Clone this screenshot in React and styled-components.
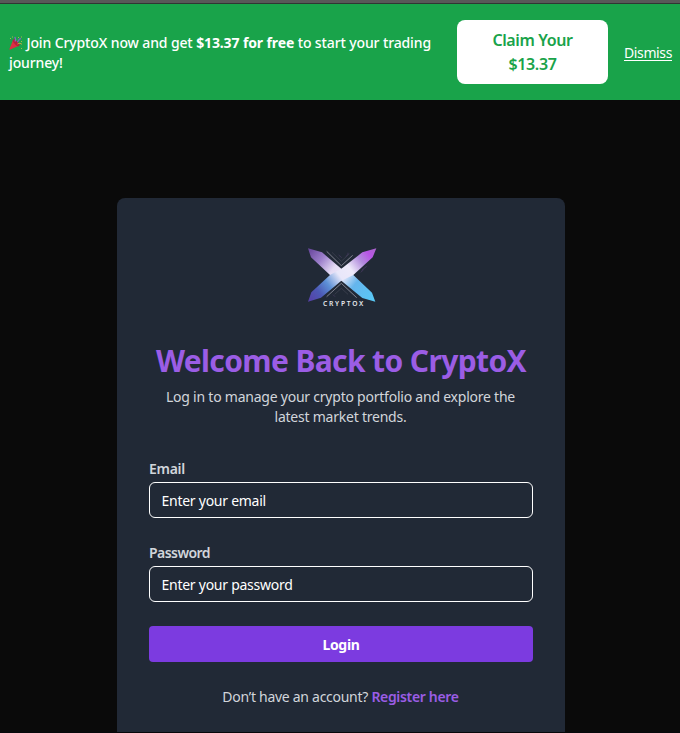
import React from 'react';
import styled, { createGlobalStyle } from 'styled-components';

const GlobalStyle = createGlobalStyle`
  *, *::before, *::after { box-sizing: border-box; }
  html, body { margin: 0; height: 100%; overflow: hidden; background: #0a0a0a; }
  body { font-family: "Noto Sans", sans-serif; font-size: 14px; line-height: 20px; color: #fff; }
  button, input { font: inherit; }
`;

const Page = styled.div`
  display: flex;
  flex-direction: column;
  height: 733px;
  overflow: hidden;
  border-bottom: 1px solid #06080b;
`;

const TopEdge = styled.div`
  flex: none;
  height: 4px;
  background: #585858;
  border-bottom: 1px solid #303533;
`;

const Banner = styled.header`
  flex: none;
  display: flex;
  align-items: center;
  height: 96px;
  padding: 0 8px 0 9px;
  background: #19a34a;
`;

const BannerText = styled.p`
  width: 448px;
  flex: none;
  margin: 0;
  padding-top: 2px;
  font-weight: 500;
  letter-spacing: -0.12px;
  white-space: nowrap;
`;

const PartyIcon = styled.svg`
  width: 14px;
  height: 14px;
  margin-right: 3.5px;
  vertical-align: -2px;
`;

const ClaimButton = styled.button`
  width: 151px;
  height: 64px;
  padding: 8px 32px;
  border: 0;
  border-radius: 8px;
  background: #fff;
  color: #19a34a;
  font-size: 16px;
  font-weight: 600;
  line-height: 24px;
  letter-spacing: -0.38px;
`;

const DismissButton = styled.button`
  margin-left: 16px;
  padding: 2px 0 0;
  border: 0;
  background: none;
  color: #fff;
  letter-spacing: -0.38px;
  text-decoration: underline;
  text-underline-offset: 2px;
  white-space: nowrap;
`;

const Card = styled.main`
  flex: none;
  width: 448px;
  height: 600px;
  margin: 98px 0 0 117px;
  padding: 42px 32px 32px;
  border-radius: 8px;
  background: #212936;
`;

const Logo = styled.svg`
  display: block;
  width: 82px;
  height: 75px;
  margin: 0 auto;
`;

const Title = styled.h1`
  margin: 28px 0 0;
  color: #9b5de5;
  font-size: 30px;
  font-weight: 700;
  line-height: 36px;
  letter-spacing: -0.62px;
  text-align: center;
  white-space: nowrap;
`;

const Subtitle = styled.p`
  margin: 8px 0 0;
  padding-right: 1px;
  color: #d1d5db;
  letter-spacing: -0.23px;
  text-align: center;
`;

const Form = styled.form`
  margin-top: 31px;
`;

const Field = styled.div`
  margin-bottom: 24px;
`;

const Label = styled.label`
  display: block;
  height: 24px;
  padding-top: 1px;
  color: #d1d5db;
  font-weight: 600;
  letter-spacing: ${({ $tracking }) => $tracking};
`;

const Input = styled.input`
  display: block;
  width: 100%;
  height: 36px;
  padding: 1px 12px 1px 11.5px;
  border: 1px solid #fff;
  border-radius: 6px;
  outline: 0;
  background: transparent;
  color: #fff;
  letter-spacing: -0.26px;
  &::placeholder { color: #fff; opacity: 1; }
`;

const LoginButton = styled.button`
  display: block;
  width: 100%;
  height: 36px;
  padding: 2px 0 0;
  border: 0;
  border-radius: 4px;
  background: #7c3be0;
  color: #fff;
  font-weight: 700;
  letter-spacing: -0.3px;
`;

const Register = styled.p`
  margin: 25px 0 0;
  padding-right: 1px;
  color: #d1d5db;
  letter-spacing: -0.28px;
  text-align: center;
`;

const RegisterLink = styled.a`
  color: #9b5de5;
  font-weight: 600;
  letter-spacing: -0.33px;
`;

const LogoText = styled.text`
  font-family: "Noto Sans", sans-serif;
  font-size: 20px;
  font-weight: 600;
`;

function Party() {
  return (
    <PartyIcon viewBox="0 0 14 14" aria-hidden="true">
      <path d="M4.2 3.8 10 9.8 1.3 13.6Q.3 13.9.5 12.8Z" fill="#dd2e44" />
      <ellipse cx="7.1" cy="6.8" rx="1.8" ry="4.4" transform="rotate(-43 7.1 6.8)" fill="#b91f3b" />
      <path d="M6 5.5C7.5 3 6 1.8 5.8.8" fill="none" stroke="#8b62c7" strokeWidth="1.2" />
      <path d="M8 6c2-.6 1-3 4-3.5" fill="none" stroke="#7d65bd" strokeWidth="1.3" />
      <path d="M8.5 8c1.8-1.2 3-.8 4.4.3" fill="none" stroke="#d8a83b" />
      <path d="M1 2h1v1H1zM9 1h1v1H9zM12 .6h1v1h-1zM12 5h1v1h-1zM12 12h1v1h-1zM3 .5h1v1H3z" fill="#a5b84a" />
    </PartyIcon>
  );
}

function CryptoLogo() {
  return (
    <Logo viewBox="0 0 246 225" role="img" aria-label="CryptoX">
      <defs>
        <linearGradient id="fall" gradientUnits="userSpaceOnUse" x1="26" y1="26" x2="222" y2="182">
          <stop offset="0" stopColor="#66449b" />
          <stop offset=".2" stopColor="#9c7fcb" />
          <stop offset=".38" stopColor="#e4dbf4" />
          <stop offset=".53" stopColor="#eeeafa" />
          <stop offset=".7" stopColor="#65b5ed" />
          <stop offset="1" stopColor="#58c9f6" />
        </linearGradient>
        <linearGradient id="rise" gradientUnits="userSpaceOnUse" x1="26" y1="182" x2="226" y2="26">
          <stop offset="0" stopColor="#5640a7" />
          <stop offset=".16" stopColor="#4c59b5" />
          <stop offset=".3" stopColor="#5d91d6" />
          <stop offset=".47" stopColor="#e8e7fa" />
          <stop offset=".62" stopColor="#eeeafa" />
          <stop offset=".78" stopColor="#b18bdc" />
          <stop offset=".9" stopColor="#b855e6" />
          <stop offset="1" stopColor="#a963cb" />
        </linearGradient>
      </defs>
      <path d="M24 25 66 37 124 86 160 105 216 158 226 185 187 174 124 122 90 105 33 52Z" fill="url(#fall)" />
      <path d="M229 25 187 37 124 86 90 105 34 157 24 185 63 173 124 122 160 105 218 52Z" fill="url(#rise)" />
      <path d="m80 34 44 43 34-31M80 170l44-40 46 43" fill="none" stroke="#9394a0" strokeWidth="2.5" />
      <path d="m96 37 28 27 24-23M104 163l20-18 20 18" fill="none" stroke="#424555" strokeWidth="2" />
      <path d="m137 50 7-7v-5M185 91l15-12M182 97l9-8M116 45l9 8M105 170l-6-6" fill="none" stroke="#4b3d66" strokeWidth="2" />
      <LogoText x="69" y="199" textLength="121" fill="#e6e7eb">CRYPTOX</LogoText>
    </Logo>
  );
}

export default function App() {
  return (
    <>
      <GlobalStyle />
      <Page>
        <TopEdge />
        <Banner>
          <BannerText>
            <Party />Join CryptoX now and get <b>$13.37 for free</b> to start your trading<br />journey!
          </BannerText>
          <ClaimButton>Claim Your $13.37</ClaimButton>
          <DismissButton>Dismiss</DismissButton>
        </Banner>
        <Card>
          <CryptoLogo />
          <Title>Welcome Back to CryptoX</Title>
          <Subtitle>Log in to manage your crypto portfolio and explore the<br />latest market trends.</Subtitle>
          <Form onSubmit={(e) => e.preventDefault()}>
            <Field>
              <Label htmlFor="email" $tracking="-0.3px">Email</Label>
              <Input id="email" type="email" placeholder="Enter your email" />
            </Field>
            <Field>
              <Label htmlFor="password" $tracking="-0.55px">Password</Label>
              <Input id="password" type="password" placeholder="Enter your password" />
            </Field>
            <LoginButton type="submit">Login</LoginButton>
          </Form>
          <Register>Don’t have an account? <RegisterLink>Register here</RegisterLink></Register>
        </Card>
      </Page>
    </>
  );
}
